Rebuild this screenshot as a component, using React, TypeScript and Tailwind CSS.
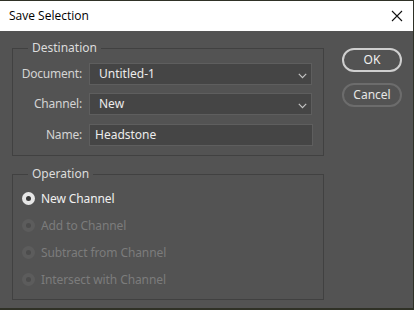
const font = { fontFamily: '"Noto Sans", "Open Sans", sans-serif' };

const Chevron = () => (
  <svg width="9" height="6" viewBox="0 0 9 6" className="absolute right-[4px] top-[9px]">
    <path d="M0.8 0.8 L4.5 4.6 L8.2 0.8" fill="none" stroke="#c4c4c4" strokeWidth="1.2" />
  </svg>
);

const Field = ({ label, value, select }: { label: string; value: string; select?: boolean }) => (
  <div className="flex items-center h-[22px]">
    <div className="w-[70px] text-right text-[12px] tracking-[-0.2px] text-[#d4d4d4] pr-[1px]">{label}</div>
    <div
      className={
        "relative ml-[6px] h-[22px] border border-[#5e5e5e] bg-[#454545] text-[12px] text-[#ececec] flex items-center " +
        (select ? "w-[223px] pl-[9px]" : "w-[224px] pl-[5px]")
      }
    >
      {value}
      {select && <Chevron />}
    </div>
  </div>
);

const Radio = ({ label, checked }: { label: string; checked?: boolean }) => (
  <div className="flex items-center h-[27px] pl-[9px]">
    {checked ? (
      <div className="w-[13px] h-[13px] rounded-full bg-[#e6e6e6] flex items-center justify-center">
        <div className="w-[5px] h-[5px] rounded-full bg-[#3a3a3a]" />
      </div>
    ) : (
      <div className="w-[13px] h-[13px] rounded-full bg-[#5c5c5c] flex items-center justify-center">
        <div className="w-[5px] h-[5px] rounded-full bg-[#4c4c4c]" />
      </div>
    )}
    <span className={"ml-[6px] text-[12px] tracking-[-0.1px] " + (checked ? "text-[#f0f0f0]" : "text-[#7c7c7c]")}>
      {label}
    </span>
  </div>
);

export default function App() {
  return (
    <div className="w-[414px] h-[310px] bg-[#2f3126] pt-[1px] overflow-hidden" style={font}>
      <div className="w-[413px] h-[307px] flex flex-col">
        <div className="h-[30px] bg-white flex items-center justify-between pl-[9px] pr-[10px]">
          <span className="text-[12px] text-black" style={{ fontFamily: '"Open Sans", "Noto Sans", sans-serif' }}>
            Save Selection
          </span>
          <svg width="12" height="12" viewBox="0 0 12 12">
            <path d="M1 1 L11 11 M11 1 L1 11" stroke="#111" strokeWidth="1.1" />
          </svg>
        </div>
        <div className="flex-1 bg-[#535353] flex pl-[12px]">
          <div className="w-[312px] flex flex-col">
            <fieldset className="mt-[9px] border border-[#414141] pb-[9px]">
              <legend className="ml-[15px] px-[4px] text-[12px] leading-[16px] text-[#dcdcdc]">Destination</legend>
              <div className="flex flex-col gap-[8px] pt-[7px]">
                <Field label="Document:" value="Untitled-1" select />
                <Field label="Channel:" value="New" select />
                <div className="mt-[1px]">
                  <Field label="Name:" value="Headstone" />
                </div>
              </div>
            </fieldset>
            <fieldset className="mt-[10px] border border-[#414141] pb-[6px]">
              <legend className="ml-[15px] px-[4px] text-[12px] leading-[16px] text-[#dcdcdc]">Operation</legend>
              <div className="flex flex-col pt-[3px]">
                <Radio label="New Channel" checked />
                <Radio label="Add to Channel" />
                <Radio label="Subtract from Channel" />
                <Radio label="Intersect with Channel" />
              </div>
            </fieldset>
          </div>
          <div className="ml-[18px] pt-[17px] flex flex-col gap-[11px]">
            <div className="w-[60px] h-[24px] rounded-full border-2 border-[#cfcfcf] flex items-center justify-center text-[12px] text-[#f0f0f0]">
              OK
            </div>
            <div className="w-[60px] h-[24px] rounded-full border-2 border-[#6c6c6c] flex items-center justify-center text-[12px] text-[#e6e6e6]">
              Cancel
            </div>
          </div>
        </div>
      </div>
    </div>
  );
}
